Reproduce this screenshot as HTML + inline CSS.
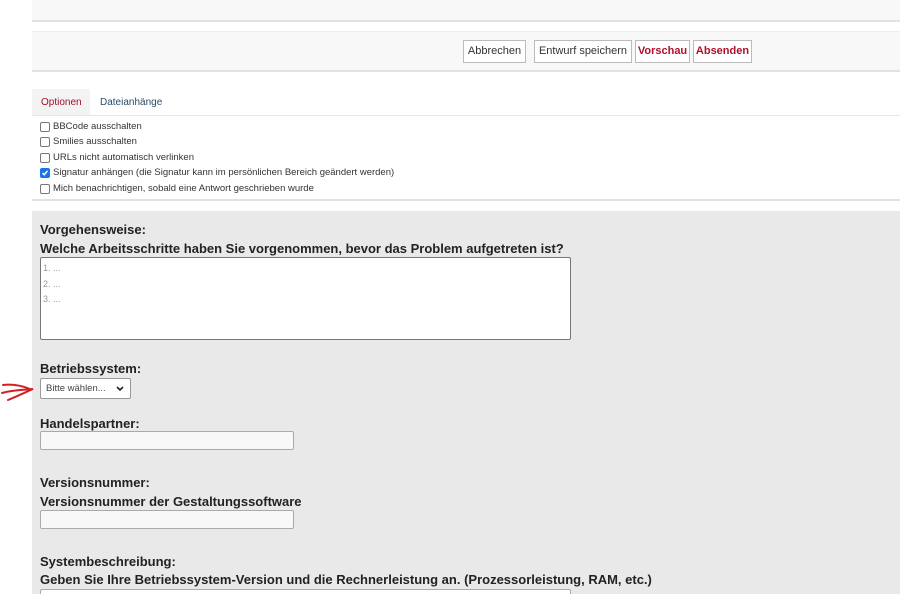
<!DOCTYPE html>
<html style="overflow:hidden"><head><style>
*{box-sizing:border-box;margin:0;padding:0}
html,body{width:900px;height:594px;overflow:hidden}
body{background:#fff;position:relative;font-family:"Liberation Sans",sans-serif;}
.a{position:absolute}
.btn{position:absolute;top:40px;height:23px;border:1px solid #bbb;background:#fff;font-size:11px;line-height:21px;text-align:center;color:#333}
.btn.r{color:#b0102a;font-weight:bold}
.cb{position:absolute;left:40px;width:10px;height:10px;border:1px solid #777;border-radius:2px;background:#fff}
.ol{position:absolute;left:53px;font-size:9.5px;color:#333;white-space:nowrap}
.lb{position:absolute;left:40px;font-size:13px;font-weight:bold;color:#222;white-space:nowrap}
.inp{position:absolute;left:40px;background:#f8f8f8;border:1px solid #aaa;border-radius:2px}
</style></head><body>
<div class="a" style="left:32px;top:0;width:868px;height:22px;background:#f8f8f8;border-bottom:2px solid #e2e2e2"></div>
<div class="a" style="left:32px;top:31px;width:868px;height:41px;background:#f8f8f8;border-top:1px solid #eee;border-bottom:2px solid #e2e2e2"></div>
<div class="btn" style="left:463px;width:63px">Abbrechen</div>
<div class="btn" style="left:534px;width:98px">Entwurf speichern</div>
<div class="btn r" style="left:635px;width:55px">Vorschau</div>
<div class="btn r" style="left:693px;width:59px">Absenden</div>
<div class="a" style="left:32px;top:89px;width:58px;height:27px;background:#f3f3f3"></div>
<div class="a" style="left:41px;top:97px;font-size:10px;color:#a0102a">Optionen</div>
<div class="a" style="left:100px;top:97px;font-size:10px;color:#2a4a6a">Dateianhänge</div>
<div class="a" style="left:32px;top:115px;width:868px;height:86px;background:#fff;border-top:1px solid #e6e6e6;border-bottom:2px solid #e2e2e2"></div>
<div class="cb" style="top:122px"></div><div class="ol" style="top:121px">BBCode ausschalten</div>
<div class="cb" style="top:137px"></div><div class="ol" style="top:136px">Smilies ausschalten</div>
<div class="cb" style="top:153px"></div><div class="ol" style="top:152px">URLs nicht automatisch verlinken</div>
<div class="cb" style="top:168px;background:#1a73e8;border-color:#1a73e8"><svg width="8" height="8" viewBox="0 0 8 8" style="position:absolute;left:0;top:0"><path d="M1.5 4L3.2 5.8L6.5 1.8" stroke="#fff" stroke-width="1.5" fill="none"/></svg></div><div class="ol" style="top:167px">Signatur anhängen (die Signatur kann im persönlichen Bereich geändert werden)</div>
<div class="cb" style="top:184px"></div><div class="ol" style="top:183px">Mich benachrichtigen, sobald eine Antwort geschrieben wurde</div>
<div class="a" style="left:32px;top:211px;width:868px;height:383px;background:#e9e9e9"></div>
<div class="lb" style="top:222px">Vorgehensweise:</div>
<div class="lb" style="top:241px">Welche Arbeitsschritte haben Sie vorgenommen, bevor das Problem aufgetreten ist?</div>
<div class="a" style="left:40px;top:257px;width:531px;height:83px;background:#fff;border:1px solid #777;border-radius:2px;font-size:9px;color:#999;line-height:15.5px;padding:3px 2px">1. ...<br>2. ...<br>3. ...</div>
<div class="lb" style="top:361px">Betriebssystem:</div>
<div class="a" style="left:40px;top:378px;width:91px;height:21px;background:#fff;border:1px solid #999;border-radius:2px;font-size:9.5px;color:#444;line-height:19px;padding-left:5px">Bitte wählen...<svg width="8" height="6" viewBox="0 0 8 6" style="position:absolute;right:6px;top:7px"><path d="M1 1L4 4L7 1" stroke="#222" stroke-width="1.6" fill="none"/></svg></div>
<svg class="a" style="left:0;top:378px" width="38" height="26" viewBox="0 0 38 26"><path d="M3 7C12 6 20 7 30 11M2 15C12 12 22 12 33 11C26 14 18 18 8 22" stroke="#d42020" stroke-width="2" fill="none" stroke-linecap="round"/></svg>
<div class="lb" style="top:416px">Handelspartner:</div>
<div class="inp" style="top:431px;width:254px;height:19px"></div>
<div class="lb" style="top:475px">Versionsnummer:</div>
<div class="lb" style="top:494px">Versionsnummer der Gestaltungssoftware</div>
<div class="inp" style="top:510px;width:254px;height:19px"></div>
<div class="lb" style="top:554px">Systembeschreibung:</div>
<div class="lb" style="top:572px">Geben Sie Ihre Betriebssystem-Version und die Rechnerleistung an. (Prozessorleistung, RAM, etc.)</div>
<div class="inp" style="top:589px;width:531px;height:19px;background:#fff"></div>
</body></html>
